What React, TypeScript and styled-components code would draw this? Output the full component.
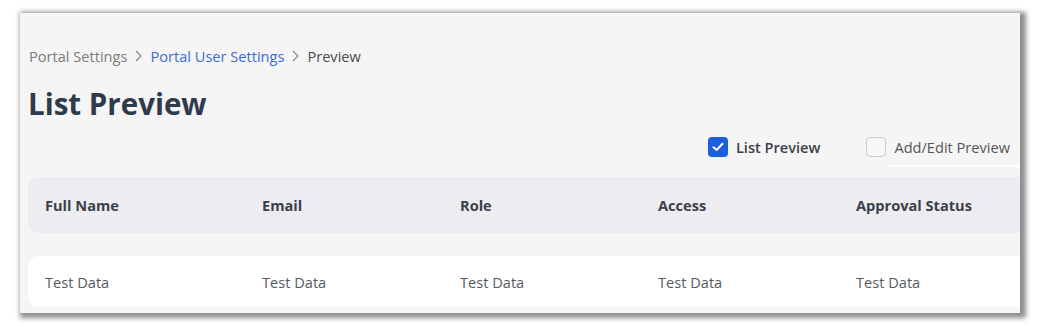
import React from 'react';
import styled, { createGlobalStyle } from 'styled-components';

const GlobalStyle = createGlobalStyle`
  html, body {
    margin: 0;
    padding: 0;
    background: #ffffff;
    font-family: "Open Sans", "Noto Sans", Arial, sans-serif;
  }
`;

const Stage = styled.div`
  width: 1040px;
  height: 327px;
  padding: 13px 0 0 20px;
  box-sizing: border-box;
  overflow: hidden;
`;

const Panel = styled.div`
  width: 1000px;
  height: 300px;
  background: #f5f5f5;
  box-shadow: 3px 2px 5px 3px rgba(0, 0, 0, 0.45);
  overflow: hidden;
  padding: 33px 0 0 8px;
  box-sizing: border-box;
`;

const Breadcrumb = styled.nav`
  display: flex;
  align-items: center;
  gap: 8px;
  height: 20px;
  font-size: 14.6px;
  padding-left: 1px;
`;

const Crumb = styled.span<{ $tone: 'muted' | 'link' | 'current' }>`
  color: ${({ $tone }) =>
    $tone === 'link' ? '#3a6cd6' : $tone === 'current' ? '#4a4a4a' : '#7b7b7b'};
`;

const Title = styled.h1`
  margin: 19px 0 0;
  font-size: 29.5px;
  font-weight: 700;
  line-height: 38px;
  color: #2f3a4c;
`;

const Toggles = styled.div`
  display: flex;
  justify-content: flex-end;
  align-items: center;
  gap: 46px;
  height: 24px;
  margin-top: 12px;
  padding-right: 10px;
  position: relative;
`;

const Toggle = styled.label`
  display: flex;
  align-items: center;
  gap: 8px;
  font-size: 14.6px;
  color: #3c3c44;
`;

const Box = styled.span<{ $checked?: boolean }>`
  width: 20px;
  height: 20px;
  border-radius: 4px;
  box-sizing: border-box;
  display: flex;
  align-items: center;
  justify-content: center;
  background: ${({ $checked }) => ($checked ? '#1b5fdc' : '#f7f7f7')};
  border: ${({ $checked }) => ($checked ? 'none' : '1px solid #cdcdcd')};
`;

const ToggleText = styled.span<{ $strong?: boolean }>`
  font-weight: ${({ $strong }) => ($strong ? 600 : 400)};
  color: ${({ $strong }) => ($strong ? '#3a3f4a' : '#555')};
`;

const Underline = styled.div`
  position: absolute;
  right: 0;
  bottom: -8px;
  width: 133px;
  height: 2px;
  background: #ffffff;
`;

const Table = styled.div`
  width: 1100px;
  margin-top: 18px;
`;

const Row = styled.div<{ $head?: boolean }>`
  display: grid;
  grid-template-columns: 217px 198px 198px 198px 198px;
  align-items: center;
  padding-left: 17px;
  border-radius: 10px;
  height: ${({ $head }) => ($head ? '56px' : '51px')};
  margin-bottom: ${({ $head }) => ($head ? '23px' : '0')};
  background: ${({ $head }) => ($head ? '#ededf1' : '#ffffff')};
  font-size: 14.6px;
  font-weight: ${({ $head }) => ($head ? 700 : 400)};
  color: ${({ $head }) => ($head ? '#3a3f4a' : '#555a63')};
`;

const Chevron = () => (
  <svg width="7" height="12" viewBox="0 0 7 12" fill="none">
    <path d="M1 1 L6 6 L1 11" stroke="#8a8a8a" strokeWidth="1.2" />
  </svg>
);

const Check = () => (
  <svg width="12" height="10" viewBox="0 0 12 10" fill="none">
    <path d="M1.5 5.2 L4.6 8 L10.5 1.8" stroke="#fff" strokeWidth="2" strokeLinecap="round" strokeLinejoin="round" />
  </svg>
);

const columns = ['Full Name', 'Email', 'Role', 'Access', 'Approval Status'];

export default function App() {
  return (
    <Stage>
      <GlobalStyle />
      <Panel>
        <Breadcrumb>
          <Crumb $tone="muted">Portal Settings</Crumb>
          <Chevron />
          <Crumb $tone="link">Portal User Settings</Crumb>
          <Chevron />
          <Crumb $tone="current">Preview</Crumb>
        </Breadcrumb>
        <Title>List Preview</Title>
        <Toggles>
          <Toggle>
            <Box $checked>
              <Check />
            </Box>
            <ToggleText $strong>List Preview</ToggleText>
          </Toggle>
          <Toggle>
            <Box />
            <ToggleText>Add/Edit Preview</ToggleText>
          </Toggle>
          <Underline />
        </Toggles>
        <Table>
          <Row $head>
            {columns.map((c) => (
              <span key={c}>{c}</span>
            ))}
          </Row>
          <Row>
            {columns.map((c) => (
              <span key={c}>Test Data</span>
            ))}
          </Row>
        </Table>
      </Panel>
    </Stage>
  );
}
